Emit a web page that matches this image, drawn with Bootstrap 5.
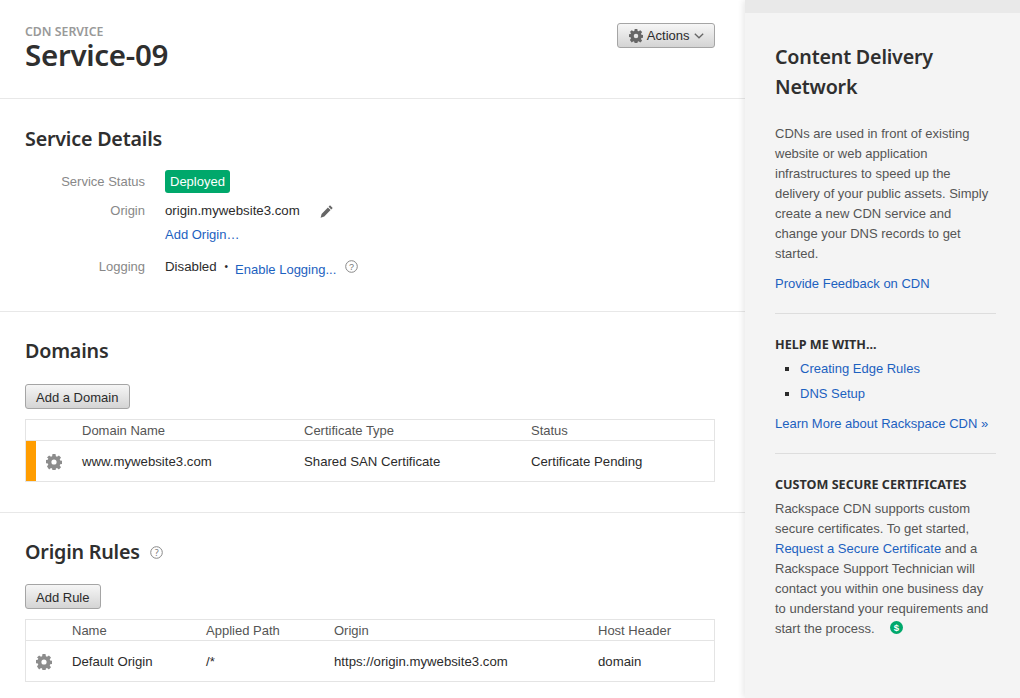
<!DOCTYPE html>
<html lang="en">
<head>
    <meta charset="UTF-8">
    <title>Service-09</title>
    <link href="https://cdn.jsdelivr.net/npm/bootstrap@5.3.0/dist/css/bootstrap.min.css" rel="stylesheet">
    <style>
        html, body { height: 100%; }
        body { font-family: "Liberation Sans", Arial, sans-serif; font-size: 13px; line-height: 20px; color: #2b2b2b; background: #fff; overflow: hidden; }
        a { color: #1c61c0; text-decoration: none; }
        .page-wrap { width: 1020px; height: 698px; overflow: hidden; }
        .main-col { width: 745px; flex: none; }
        .side-col { width: 275px; flex: none; background: #f4f4f4; box-shadow: -2px 0 6px rgba(0,0,0,.09); position: relative; padding: 42px 24px 0 30px; color: #555; }
        .side-strip { position: absolute; left: 0; right: 0; top: 0; height: 13px; background: #e9e9e9; }
        .head-font { font-family: "Noto Sans", "Open Sans", sans-serif; font-weight: 600; color: #2f2f2f; }
        .sect { padding: 0 30px 0 25px; border-bottom: 1px solid #e8e8e8; }
        .sect-top { height: 99px; padding-top: 24px; position: relative; }
        .sect-details { height: 213px; padding-top: 26px; }
        .sect-domains { height: 201px; padding-top: 25px; }
        .sect-rules { border-bottom: 0; padding-top: 25px; }
        .eyebrow { font-size: 12.3px; line-height: 16px; color: #999; }
        .title-big { font-size: 29.5px; line-height: 30px; margin: 0; letter-spacing: -.3px; }
        .sect-title { font-size: 19.7px; line-height: 28px; margin: 0; letter-spacing: -.2px; }
        .btn-gloss { font-size: 13px; line-height: 18px; color: #2b2b2b; padding: 3px 10px 2px; border: 1px solid #a5a5a5; border-radius: 3px; background: linear-gradient(#f6f6f6, #d4d4d4); display: inline-flex; align-items: center; gap: 4px; }
        .btn-gloss:hover { color: #2b2b2b; border-color: #a5a5a5; background: linear-gradient(#f6f6f6, #d4d4d4); }
        .actions-btn { position: absolute; right: 30px; top: 23px; padding-left: 10.5px; padding-right: 10.5px; }
        .btn-row { display: flex; margin: 19px 0 10px; }
        .btn-row-tight { margin-top: 18px; }
        .btn-row .btn-gloss { padding: 4px 10.5px 1px 10px; }
        .detail-row { display: flex; }
        .detail-label { width: 120px; text-align: right; color: #888; flex: none; margin-right: 20px; }
        .detail-value { font-size: 13.25px; }
        .status-pill { display: inline-block; background: #00a86b; color: #fff; border-radius: 3px; padding: 2px 5px; line-height: 19px; font-size: 13px; margin-top: -2px; }
        .log-dot { font-size: 10px; margin: 0 7px 0 8px; }
        .log-link { margin-top: 3px; font-size: 13px; }
        .log-help { margin: 3px 0 0 9px; }
        .svc-table { width: 100%; border: 1px solid #e4e4e4; border-collapse: collapse; table-layout: fixed; }
        .svc-table th { font-weight: 400; color: #555; height: 21px; padding: 1px 0 0; border-bottom: 1px solid #e4e4e4; line-height: 19px; }
        .svc-table td { height: 41px; padding: 1px 0 0; color: #2b2b2b; font-size: 13.2px; }
        .svc-table td.warn-cell { background: #ff9d00; padding: 0; }
        .row-gear { margin-left: 10px; }
        .side-title { font-size: 19.7px; line-height: 30px; margin: 0 0 22px; letter-spacing: -.2px; }
        .side-sub { font-size: 12.6px; line-height: 20px; margin: 0; font-weight: 700; }
        .side-sub-gap { margin-bottom: 4px; }
        .side-rule { border: 0; border-top: 1px solid #ddd; margin: 19px 0 21px; opacity: 1; }
        .side-col p { margin: 0; }
        .feedback-line { margin-top: 10px !important; }
        .help-list { list-style: square; margin: 1px 0 8px; padding: 0 0 0 25px; }
        .help-list li { height: 25px; line-height: 25px; }
        .help-list li::marker { color: #2b2b2b; }
        .money-icon { display: inline-block; margin-left: 12px; vertical-align: -1px; }
        svg { display: block; }
    </style>
</head>
<body>
<svg width="0" height="0" class="position-absolute">
    <defs>
        <symbol id="gear" viewBox="0 0 16 16">
            <path fill-rule="evenodd" d="M6.5 0h3l.4 2.2 1.1.5L12.900 1.400l2.100 2.100-1.300 1.900.5 1.100 2.200.4v3l-2.200.4-.5 1.100 1.300 1.900-2.100 2.100-1.900-1.300-1.100.5-.4 2.200h-3l-.4-2.200-1.100-.5-1.900 1.300L1 12.500l1.300-1.900-.5-1.100L-.4 9.100v-3l2.200-.4.5-1.100L1 3.500l2.100-2.100L5 2.700l1.100-.5zM8 5.400a2.600 2.600 0 1 0 0 5.200 2.600 2.600 0 0 0 0-5.200z"/>
        </symbol>
    </defs>
</svg>
<div class="page-wrap d-flex">
    <div class="main-col">
        <!-- Header -->
        <div class="sect sect-top">
            <div class="eyebrow head-font">CDN SERVICE</div>
            <h1 class="title-big head-font">Service-09</h1>
            <a href="#" class="btn btn-gloss actions-btn">
                <svg width="14" height="14" fill="#666"><use href="#gear"/></svg>
                Actions
                <svg width="10" height="6" viewBox="0 0 10 6" fill="none" stroke="#666" stroke-width="1.3"><path d="M.8.8l4.200 4 4.200-4"/></svg>
            </a>
        </div>

        <!-- Service Details -->
        <div class="sect sect-details">
            <h2 class="sect-title head-font">Service Details</h2>
            <div class="detail-row mt-3 align-items-center" style="height:26px">
                <div class="detail-label">Service Status</div>
                <span class="status-pill">Deployed</span>
            </div>
            <div class="detail-row" style="margin-top:6px">
                <div class="detail-label">Origin</div>
                <div class="detail-value">
                    <div class="d-flex align-items-center">origin.mywebsite3.com
                        <svg style="margin-left:20px" width="13" height="13" viewBox="0 0 13 13" fill="#666"><path d="M10 .3l2.700 2.700-1.400 1.400-2.700-2.700zM7.900 2.400l2.700 2.700-6.300 6.300-3.700 1.300 1-3.700z"/></svg>
                    </div>
                    <a href="#" class="d-block" style="margin-top:4px;font-size:13px">Add Origin…</a>
                </div>
            </div>
            <div class="detail-row" style="margin-top:12px">
                <div class="detail-label">Logging</div>
                <div class="d-flex align-items-start detail-value">Disabled
                    <span class="log-dot">•</span>
                    <a href="#" class="log-link">Enable Logging...</a>
                    <svg class="log-help" width="13" height="13" viewBox="0 0 13 13"><circle cx="6.500" cy="6.500" r="5.800" fill="none" stroke="#888"/><text x="6.500" y="9.700" text-anchor="middle" font-size="9" fill="#777">?</text></svg>
                </div>
            </div>
        </div>

        <!-- Domains -->
        <div class="sect sect-domains">
            <h2 class="sect-title head-font">Domains</h2>
            <div class="btn-row"><a href="#" class="btn btn-gloss">Add a Domain</a></div>
            <table class="svc-table">
                <colgroup><col style="width:10px"><col style="width:46.5px"><col style="width:222px"><col style="width:227px"><col></colgroup>
                <tr><th colspan="2"></th><th>Domain Name</th><th>Certificate Type</th><th>Status</th></tr>
                <tr>
                    <td class="warn-cell"></td>
                    <td><svg class="row-gear" width="16" height="16" fill="#8c8c8c"><use href="#gear"/></svg></td>
                    <td>www.mywebsite3.com</td>
                    <td>Shared SAN Certificate</td>
                    <td>Certificate Pending</td>
                </tr>
            </table>
        </div>

        <!-- Origin Rules -->
        <div class="sect sect-rules">
            <h2 class="sect-title head-font d-flex align-items-center">Origin Rules
                <svg style="margin-left:10px" width="13" height="13" viewBox="0 0 13 13"><circle cx="6.500" cy="6.500" r="5.800" fill="none" stroke="#888"/><text x="6.500" y="9.700" text-anchor="middle" font-size="9" font-weight="400" fill="#777">?</text></svg>
            </h2>
            <div class="btn-row btn-row-tight"><a href="#" class="btn btn-gloss">Add Rule</a></div>
            <table class="svc-table">
                <colgroup><col style="width:46.5px"><col style="width:134px"><col style="width:128px"><col style="width:264px"><col></colgroup>
                <tr><th></th><th>Name</th><th>Applied Path</th><th>Origin</th><th>Host Header</th></tr>
                <tr>
                    <td><svg class="row-gear" width="16" height="16" fill="#8c8c8c"><use href="#gear"/></svg></td>
                    <td>Default Origin</td>
                    <td>/*</td>
                    <td>https://origin.mywebsite3.com</td>
                    <td>domain</td>
                </tr>
            </table>
        </div>
    </div>

    <!-- Sidebar -->
    <div class="side-col">
        <div class="side-strip"></div>
        <h3 class="side-title head-font">Content Delivery Network</h3>
        <p>CDNs are used in front of existing website or web application infrastructures to speed up the delivery of your public assets. Simply create a new CDN service and change your DNS records to get started.</p>
        <p class="feedback-line"><a href="#">Provide Feedback on CDN</a></p>
        <hr class="side-rule">
        <h4 class="side-sub head-font">HELP ME WITH...</h4>
        <ul class="help-list">
            <li><a href="#">Creating Edge Rules</a></li>
            <li><a href="#">DNS Setup</a></li>
        </ul>
        <p><a href="#">Learn More about Rackspace CDN »</a></p>
        <hr class="side-rule">
        <h4 class="side-sub side-sub-gap head-font">CUSTOM SECURE CERTIFICATES</h4>
        <p>Rackspace CDN supports custom secure certificates. To get started, <a href="#">Request a Secure Certificate</a> and a Rackspace Support Technician will contact you within one business day to understand your requirements and start the process.
            <svg class="money-icon" width="13" height="13" viewBox="0 0 13 13"><circle cx="6.500" cy="6.500" r="6.500" fill="#00a86b"/><text x="6.500" y="10" text-anchor="middle" font-size="9.500" font-weight="700" fill="#fff">$</text></svg>
        </p>
    </div>
</div>
<script src="https://cdn.jsdelivr.net/npm/bootstrap@5.3.0/dist/js/bootstrap.bundle.min.js"></script>
</body>
</html>
